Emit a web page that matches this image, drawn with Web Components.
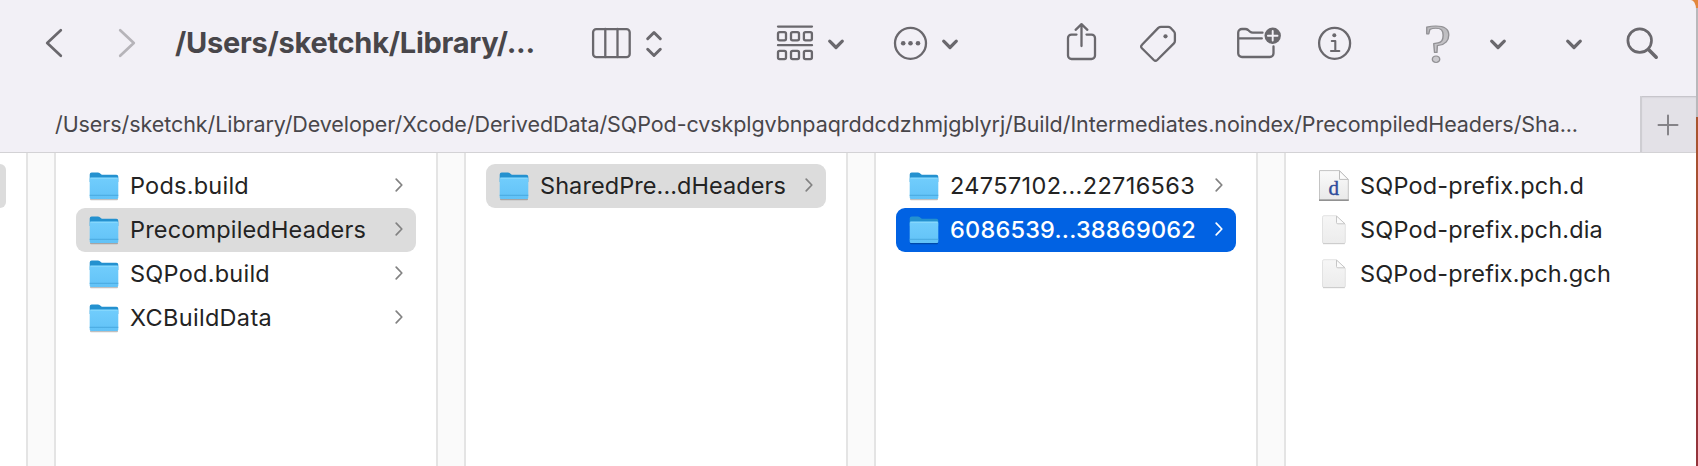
<!DOCTYPE html>
<html lang="en">
<head>
<meta charset="utf-8">
<title>Finder</title>
<style>
html,body{margin:0;padding:0;height:100%;overflow:hidden}
body{font-family:Inter,"Liberation Sans",sans-serif;background:#fff}
</style>
</head>
<body>
<finder-window></finder-window>
<script>
const define = (name, html, setup) => {
  const tpl = document.createElement('template');
  tpl.innerHTML = html;
  customElements.define(name, class extends HTMLElement {
    connectedCallback() {
      if (this.shadowRoot) return;
      this.attachShadow({ mode: 'open' }).append(tpl.content.cloneNode(true));
      if (setup) setup(this, this.shadowRoot);
    }
  });
};

/* Single-line label whose tracking is adjusted so that it fills a given width. */
define('fit-label', `<style>
:host{display:block;white-space:nowrap;flex:none}
span{display:inline-block}
</style><span><slot></slot></span>`, (el, root) => {
  const span = root.querySelector('span');
  const n = [...el.textContent].length;
  const w = span.getBoundingClientRect().width;
  const spacing = (+el.getAttribute('width') - w) / n;
  span.style.letterSpacing = spacing.toFixed(4) + 'px';
});

const chev = x => `<path d="M${x + 1.7} 41.2l6.3 6.3 6.3-6.3" stroke-width="3.2"/>`;
/* [left edge, width, drawing]; drawings use the toolbar's own coordinates */
const ICONS = {
  back: [46, 16, '<path d="M60.800 30.200L47.200 43L60.800 55.800" stroke-width="2.700"/>'],
  forward: [119, 16, '<path d="M120.200 30.200L133.800 43L120.200 55.800" stroke-width="2.700" stroke="#b6b4b9"/>'],
  columns: [592, 39, '<rect x="593.1" y="29.100" width="36.600" height="28" rx="3.200"/><path d="M605.300 29v28M617.500 29v28"/>'],
  updown: [646, 16, '<path d="M647.700 38.700l6.300-6.200 6.300 6.200M647.700 49.300l6.300 6.200 6.300-6.200" stroke-width="3"/>'],
  group: [777, 36, '<path d="M778 26.600h34M778 45.200h34"/><rect x="778" y="32.100" width="8" height="8.300" rx="1.600"/><rect x="791" y="32.100" width="8" height="8.300" rx="1.600"/><rect x="803.900" y="32.100" width="8" height="8.300" rx="1.600"/><rect x="778" y="50.900" width="8" height="8.300" rx="1.600"/><rect x="791" y="50.900" width="8" height="8.300" rx="1.600"/><rect x="803.900" y="50.900" width="8" height="8.300" rx="1.600"/>'],
  chevA: [828, 16, chev(828)],
  more: [894, 33, '<circle cx="910.500" cy="43.300" r="15.500"/><g fill="#6a686d" stroke="none"><circle cx="903.200" cy="43.300" r="2.300"/><circle cx="910.500" cy="43.300" r="2.300"/><circle cx="918" cy="43.300" r="2.300"/></g>'],
  chevB: [942, 16, chev(942)],
  share: [1067, 29, '<path d="M1076.500 34.600h-5a3.500 3.500 0 0 0-3.500 3.500v17.400a3.500 3.500 0 0 0 3.500 3.500h20a3.500 3.500 0 0 0 3.500-3.500V38.100a3.500 3.500 0 0 0-3.500-3.500h-5M1081.500 46V24.500M1075.600 29.800l5.900-5.700 5.900 5.700"/>'],
  tag: [1140, 36, '<path d="M1158.300 27.900Q1159.500 26.900 1161 26.900H1168.200Q1169.600 26.900 1170.500 27.800L1174 31.500Q1174.900 32.400 1174.900 33.900V41Q1174.900 42.400 1173.900 43.400L1157.200 60Q1155.500 61.600 1153.800 60L1141.900 48.200Q1140.200 46.500 1142 44.800Z"/><circle cx="1165.500" cy="36.300" r="2.100" fill="#6a686d" stroke="none"/>'],
  newfolder: [1237, 44, '<path d="M1262.500 32.700h-9.800q-1.500 0-2.700-1l-1.900-1.700q-1.200-1-2.800-1h-3.300a3.800 3.800 0 0 0-3.800 3.800V53.200a3.800 3.800 0 0 0 3.800 3.800h27.700a3.800 3.800 0 0 0 3.800-3.800V46.500M1238.300 38.400h23.500"/><circle cx="1272.700" cy="35.700" r="8.200" fill="#6a686d" stroke="none"/><path d="M1267.900 35.700h9.600M1272.700 30.900v9.600" stroke="#f2f0f6" stroke-width="1.900"/>'],
  info: [1318, 33, '<circle cx="1334.600" cy="43.300" r="15.500"/><circle cx="1334.300" cy="35.300" r="2" fill="#6a686d" stroke="none"/><path d="M1331.800 41h3.500v9.900M1331 51h8.300" stroke-width="2.100"/>'],
  help: [1424, 28, '<defs><linearGradient id="g" x1="0" x2="0" y1="0" y2="1"><stop offset="0" stop-color="#b5b4b7"/><stop offset="1" stop-color="#d2d0d5"/></linearGradient></defs><text transform="translate(1437.500 61.800) scale(1.12 1)" text-anchor="middle" font-family="Liberation Serif" font-size="56" fill="url(#g)" stroke="#929195" stroke-width="1.200">?</text>'],
  chevC: [1490, 16, chev(1490)],
  chevD: [1566, 16, chev(1566)],
  search: [1627, 32, '<circle cx="1639.700" cy="40.600" r="11.800" stroke-width="2.700"/><path d="M1648.500 49.500L1656.200 57.200" stroke-width="3.600"/>']
};
define('tool-icon', `<style>
:host{display:block;flex:none;height:86px}
svg{display:block;overflow:visible}
</style>`, (el, root) => {
  const [x, w, body] = ICONS[el.getAttribute('name')];
  const box = document.createElement('div');
  box.innerHTML = `<svg width="${w}" height="86" viewBox="${x} 0 ${w} 86" fill="none" stroke="#6a686d" stroke-width="2.300" stroke-linecap="round" stroke-linejoin="round">${body}</svg>`;
  root.append(box);
});

define('tool-bar', `<style>
:host{display:flex;height:96px;align-items:flex-start;padding-left:46px;color:#48464a}
fit-label{font-size:29px;font-weight:700;line-height:86px;width:360px;margin:0 57px 0 40px}
.g15{margin-left:15px}
</style>
<tool-icon name="back"></tool-icon>
<tool-icon name="forward" style="margin-left:57px"></tool-icon>
<fit-label width="360">/Users/sketchk/Library/...</fit-label>
<tool-icon name="columns"></tool-icon>
<tool-icon name="updown" class="g15"></tool-icon>
<tool-icon name="group" style="margin-left:115px"></tool-icon>
<tool-icon name="chevA" class="g15"></tool-icon>
<tool-icon name="more" style="margin-left:50px"></tool-icon>
<tool-icon name="chevB" class="g15"></tool-icon>
<tool-icon name="share" style="margin-left:109px"></tool-icon>
<tool-icon name="tag" style="margin-left:44px"></tool-icon>
<tool-icon name="newfolder" style="margin-left:61px"></tool-icon>
<tool-icon name="info" style="margin-left:37px"></tool-icon>
<tool-icon name="help" style="margin-left:73px"></tool-icon>
<tool-icon name="chevC" style="margin-left:38px"></tool-icon>
<tool-icon name="chevD" style="margin-left:60px"></tool-icon>
<tool-icon name="search" style="margin-left:45px"></tool-icon>`);

define('tab-bar', `<style>
:host{display:flex;height:56px;border-bottom:1px solid #d3d2d5;color:#48464a}
.tab{flex:1;padding-left:55px}
fit-label{font-size:21.5px;line-height:57px}
.new{box-sizing:border-box;width:56px;background:#e3e1e7;border-left:2px solid #cecdd2;box-shadow:inset 0 2px 2px -1px #bdbcc1;display:flex;align-items:center;justify-content:center}
svg{display:block;margin:2px 2px 0 0}
</style>
<div class="tab"><fit-label width="1523">/Users/sketchk/Library/Developer/Xcode/DerivedData/SQPod-cvskplgvbnpaqrddcdzhmjgblyrj/Build/Intermediates.noindex/PrecompiledHeaders/Sha...</fit-label></div>
<div class="new"><svg width="22" height="22" viewBox="0 0 22 22" stroke="#858388" stroke-width="2" stroke-linecap="round"><path d="M1.500 11h19M11 1.500v19"/></svg></div>`);

const FOLDER = `<svg width="34" height="32" viewBox="0 0 34 32"><defs>
<linearGradient id="f" x1="0" x2="0" y1="0" y2="1"><stop offset="0" stop-color="#71cdfc"/><stop offset="1" stop-color="#62c2f7"/></linearGradient></defs>
<path d="M3 28.500h28v.8q0 .9-1 .9H4q-1 0-1-.9z" fill="#000" opacity=".25"/>
<path d="M2.700 4.400q0-2 2-2h6.200q1.200 0 2 .8l1.200 1q.7.600 1.700.600H29.300q2 0 2 2V12H2.700z" fill="#2491cf"/>
<path d="M2.700 8.900q0-1.300 1.300-1.300H30q1.300 0 1.300 1.300V27.500q0 1.500-1.500 1.500H4.200q-1.500 0-1.500-1.500z" fill="url(#f)"/>
<path d="M3.500 8.300h27" stroke="#8adafd" stroke-width="1"/><path d="M2.700 25.300h28.600" stroke="#49a9df" stroke-width="1"/></svg>`;
const DOC = `<svg width="34" height="32" viewBox="0 0 34 32"><defs><linearGradient id="p" x1="0" x2="0" y1="0" y2="1"><stop offset="0" stop-color="#f6f6f6"/><stop offset="1" stop-color="#ececec"/></linearGradient></defs>
<path d="M5.500 3.200q0-1.500 1.500-1.500H19L28.300 10.300V28q0 1.500-1.500 1.500H7q-1.500 0-1.500-1.500z" fill="url(#p)" stroke="#dcdcdc" stroke-width=".8"/><path d="M6 29.700h21.800" stroke="#c2c2c2" stroke-width=".8"/>
<path d="M19.500 2v6.500q0 1.300 1.300 1.300H28z" fill="#fbfbfb" stroke="#c6c6c6" stroke-width="1"/></svg>`;
const DDOC = `<svg width="34" height="32" viewBox="0 0 34 32"><defs><linearGradient id="p" x1="0" x2="0" y1="0" y2="1"><stop offset="0" stop-color="#fafafa"/><stop offset="1" stop-color="#e9e9e9"/></linearGradient></defs>
<path d="M2.500.6H22.500L31.300 9.400V30H2.500z" fill="url(#p)" stroke="#c4c4c4" stroke-width="1"/><path d="M2 30.200H31.800" stroke="#888" stroke-width="1.400"/>
<path d="M22.500 .8V9.400H31.200z" fill="#fdfdfd" stroke="#bdbdbd" stroke-width="1"/>
<text x="16.700" y="24.500" text-anchor="middle" font-family="Liberation Serif" font-size="21" fill="#2b4c9b" stroke="#2b4c9b" stroke-width=".4">d</text></svg>`;

define('file-row', `<style>
:host{display:flex;box-sizing:border-box;height:44px;border-radius:9px;padding:0 13px 0 11px;align-items:center;color:#232323;font-size:23.5px;line-height:44px;letter-spacing:0}
:host([state=dim]){background:#dcdcdc}
:host([state=active]){background:#0162e3;color:#fff;font-weight:500}
.icon{width:34px;height:32px;flex:none;margin-right:9px}
.icon svg{display:block}
.name{flex:1;min-width:0}
.go{display:block;stroke:#828282;margin-top:-3px}
:host([state=active]) .go{stroke:#fff}
:host([kind=doc]) .go,:host([kind=ddoc]) .go{display:none}
</style>
<div class="icon"></div><div class="name"><slot></slot></div>
<svg class="go" width="8" height="14" viewBox="0 0 8 14" fill="none" stroke-width="1.700" stroke-linecap="round" stroke-linejoin="round"><path d="M1.200 1.200L6.800 7L1.200 12.800"/></svg>`, (el, root) => {
  root.querySelector('.icon').innerHTML = { doc: DOC, ddoc: DDOC }[el.getAttribute('kind')] || FOLDER;
});

define('file-column', `<style>
:host{display:block;box-sizing:border-box;flex:none;width:380px;padding:11px 20px 0;background:#fff}
</style><slot></slot>`);
define('column-divider', `<style>
:host{display:block;box-sizing:border-box;flex:none;width:30px;background:#fafafa;border:solid #e4e4e4;border-width:0 2px}
</style>`);

define('column-browser', `<style>
:host{display:flex;flex:1;overflow:hidden;background:#fff}
.first{width:26px;flex:none;padding-top:11px}
.sel{width:6px;height:44px;background:#dcdcdc;border-radius:0 9px 9px 0}
</style>
<div class="first"><div class="sel"></div></div>
<column-divider></column-divider>
<file-column>
<file-row><fit-label width="119">Pods.build</fit-label></file-row>
<file-row state="dim"><fit-label width="236">PrecompiledHeaders</fit-label></file-row>
<file-row><fit-label width="140">SQPod.build</fit-label></file-row>
<file-row><fit-label width="142">XCBuildData</fit-label></file-row>
</file-column>
<column-divider></column-divider>
<file-column><file-row state="dim"><fit-label width="246">SharedPre...dHeaders</fit-label></file-row></file-column>
<column-divider></column-divider>
<file-column>
<file-row><fit-label width="245">24757102...22716563</fit-label></file-row>
<file-row state="active"><fit-label width="246">6086539...38869062</fit-label></file-row>
</file-column>
<column-divider></column-divider>
<file-column>
<file-row kind="ddoc"><fit-label width="224">SQPod-prefix.pch.d</fit-label></file-row>
<file-row kind="doc"><fit-label width="243">SQPod-prefix.pch.dia</fit-label></file-row>
<file-row kind="doc"><fit-label width="251">SQPod-prefix.pch.gch</fit-label></file-row>
</file-column>`);

define('finder-window', `<style>
:host{display:block;width:1698px;height:466px;background:linear-gradient(#e2873c 0 8px,#b9b8bb 8px 117px,#a9552f 117px,#a44a35 250px,#963538 400px,#93343c)}
.win{display:flex;flex-direction:column;width:1696px;height:466px;background:#f2f0f6;border-top-right-radius:5px 9px;overflow:hidden}
</style>
<div class="win"><tool-bar></tool-bar><tab-bar></tab-bar><column-browser></column-browser></div>`);
</script>
</body>
</html>
